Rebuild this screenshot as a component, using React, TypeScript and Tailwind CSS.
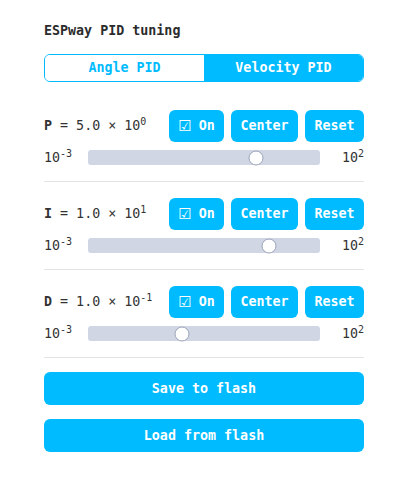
import React, { useState } from "react";

type Gain = {
  name: string;
  mant: string;
  exp: number;
  value: number;
};

const gains: Gain[] = [
  { name: "P", mant: "5.0", exp: 0, value: 5.0 },
  { name: "I", mant: "1.0", exp: 1, value: 10 },
  { name: "D", mant: "1.0", exp: -1, value: 0.1 },
];

const MIN_EXP = -3;
const MAX_EXP = 2;

const LogSlider: React.FC<{ value: number }> = ({ value }) => {
  // position on a log scale between 10^-3 and 10^2
  const frac = (Math.log10(value) - MIN_EXP) / (MAX_EXP - MIN_EXP);
  return (
    <div className="flex items-center h-[15px]">
      <span className="w-11 shrink-0 text-[13.33px] text-[#333]">
        10<sup>-3</sup>
      </span>
      <div className="relative flex-1 h-[15px] rounded-[3px] bg-[#d0d6e4]">
        <div
          className="absolute top-1/2 w-[15px] h-[15px] -translate-x-1/2 -translate-y-1/2 rounded-full bg-white border border-[#9aa3b8]"
          style={{ left: `calc(7.5px + (100% - 15px) * ${frac})` }}
        />
      </div>
      <span className="w-11 shrink-0 text-right text-[13.33px] text-[#333]">
        10<sup>2</sup>
      </span>
    </div>
  );
};

const btn =
  "h-[32px] flex items-center justify-center whitespace-nowrap rounded-md bg-[#00bbff] text-white font-bold text-[13.33px]";

export default function App() {
  const [tab, setTab] = useState<"angle" | "velocity">("velocity");

  return (
    <div className="min-h-screen bg-white font-['DejaVu_Sans_Mono',monospace] text-[#333]">
      <div className="w-[320px] ml-[44px] pt-[21px]">
        <h1 className="text-[13.33px] font-bold leading-5 text-[#2b2b2b]">
          ESPway PID tuning
        </h1>

        {/* tabs */}
        <div className="mt-[13px] flex h-[28px] rounded-md border border-[#00bbff] overflow-hidden">
          <button
            onClick={() => setTab("angle")}
            className={`flex-1 text-[13.33px] font-bold ${
              tab === "angle" ? "bg-[#00bbff] text-white" : "bg-white text-[#00bbff]"
            }`}
          >
            Angle PID
          </button>
          <button
            onClick={() => setTab("velocity")}
            className={`flex-1 text-[13.33px] font-bold ${
              tab === "velocity" ? "bg-[#00bbff] text-white" : "bg-white text-[#00bbff]"
            }`}
          >
            Velocity PID
          </button>
        </div>

        <div className="mt-3">
          {gains.map((g) => (
            <div key={g.name} className="pt-4 pb-[16px] border-b border-[#e3e3e3]">
              <div className="flex items-center">
                <span className="flex-1 text-[13.33px]">
                  <b>{g.name}</b> = {g.mant} × 10<sup>{g.exp}</sup>
                </span>
                <div className="flex gap-[7px]">
                  <button className={`${btn} w-[55px] gap-[7px]`}>
                    <span className="font-normal text-[15px] font-['DejaVu_Sans',sans-serif]">☑</span>
                    <span>On</span>
                  </button>
                  <button className={`${btn} w-[67px]`}>Center</button>
                  <button className={`${btn} w-[59px]`}>Reset</button>
                </div>
              </div>
              <div className="mt-2">
                <LogSlider value={g.value} />
              </div>
            </div>
          ))}
        </div>

        <div className="mt-[14px] flex flex-col gap-[14px]">
          <button className={`${btn} w-full h-[33px]`}>Save to flash</button>
          <button className={`${btn} w-full h-[33px]`}>Load from flash</button>
        </div>
      </div>
    </div>
  );
}
